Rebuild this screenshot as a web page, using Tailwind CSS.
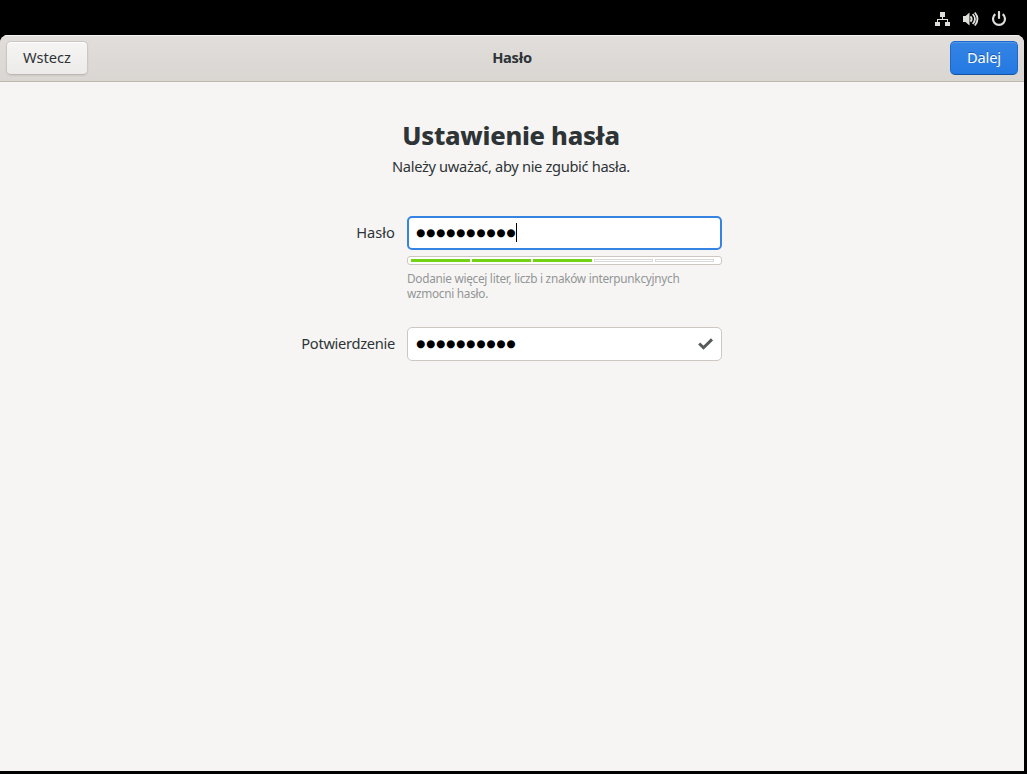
<!DOCTYPE html>
<html lang="pl">
<head>
<meta charset="utf-8">
<title>Hasło</title>
<script src="https://cdn.jsdelivr.net/npm/@tailwindcss/browser@4"></script>
</head>
<body class="w-[1027px] h-[774px] overflow-hidden bg-black flex flex-col font-['Noto_Sans',sans-serif] text-[14.67px] text-[#2e3436]">
  <div class="h-[35px] shrink-0 flex items-center justify-end gap-3 pr-5 pt-[3px] text-[#dededa]">
    <svg class="size-4" viewBox="0 0 16 16" fill="currentColor"><path d="M5 1h5v5H8v2h5v3h2v4h-5v-4h2V9H3v2h2v4H0v-4h2V8h5V6H5z"/></svg>
    <svg class="size-4" viewBox="0 0 16 16" fill="currentColor"><path d="M0 5h2.500L6.500 1.500v13L2.500 11H0z"/><g fill="none" stroke="currentColor" stroke-width="1.8"><path d="M7.500 5.300q2.400 2.700 0 5.400"/><path d="M9.700 3q4.600 5 0 10"/><path d="M11.800 1.500q5.400 6.500 0 13"/></g></svg>
    <svg class="size-4" viewBox="0 0 16 16" fill="none" stroke="currentColor" stroke-width="2.2"><path d="M4.300 3.100a6 6 0 1 0 7.400 0"/><path d="M8 1v6" stroke-linecap="round"/></svg>
  </div>
  <main class="w-[1024px] h-[736px] shrink-0 rounded-t-[8px] bg-[#f6f5f4] flex flex-col overflow-hidden">
    <header class="h-[47px] shrink-0 flex items-center justify-between px-[6px] border-b border-[#bfb8b1] bg-linear-to-b from-[#e1dedb] to-[#dad6d2] shadow-[inset_0_1px_#f5f4f2]">
      <button class="w-[82px] h-[34px] pb-[2px] rounded-[5px] border border-[#cdc7c2] border-b-[#bfb8b1] bg-linear-to-t from-[#edebe9] to-[#f6f5f4] shadow-[inset_0_1px_#fff,0_1px_2px_#00000012]">Wstecz</button>
      <h1 class="font-bold pb-[2px] mr-[14px] tracking-[-0.25px]">Hasło</h1>
      <button class="w-[68px] h-[34px] pb-[2px] rounded-[5px] border border-[#1b6acb] border-b-[#15539e] bg-linear-to-t from-[#2379e2] to-[#3584e4] text-white tracking-[-0.2px] shadow-[inset_0_1px_#5397e8] [text-shadow:0_-1px_#15539ecc]">Dalej</button>
    </header>
    <section class="flex flex-col items-center pt-[35px] pr-[2px]">
      <h2 class="h-[36px] leading-[36px] text-[25.5px] font-extrabold tracking-[-0.28px] whitespace-nowrap">Ustawienie hasła</h2>
      <p class="h-[24px] leading-[26px] tracking-[-0.34px] whitespace-nowrap">Należy uważać, aby nie zgubić hasła.</p>
    </section>
    <form class="mt-[39px] grid grid-cols-[395px_315px] gap-x-3">
      <label class="h-[34px] leading-[32px] text-right">Hasło</label>
      <div>
        <div class="h-[34px] rounded-[5px] border-2 border-[#3584e4] bg-white flex items-center pl-[7px]">
          <span class="w-[100px] text-black font-['DejaVu_Sans'] text-[10.5px] leading-[20px] pb-[3px] tracking-[0.86px] whitespace-nowrap">●●●●●●●●●●</span><span class="w-px h-[19px] mb-[2px] bg-black"></span>
        </div>
        <div class="mt-[6px] h-[9px] rounded-[3px] border border-[#cdc7c2] bg-white flex gap-[2px] items-center pl-[3px]">
          <span class="w-[59px] h-[3px] bg-[#73d216]"></span><span class="w-[59px] h-[3px] bg-[#73d216]"></span><span class="w-[59px] h-[3px] bg-[#73d216]"></span><span class="w-[59px] h-[3px] border border-[#d8d8d6]"></span><span class="w-[59px] h-[3px] border border-[#d8d8d6]"></span>
        </div>
        <p class="mt-[6px] text-[11.8px] leading-[15px] tracking-[-0.28px] text-[#929595] whitespace-nowrap">Dodanie więcej liter, liczb i znaków interpunkcyjnych<br>wzmocni hasło.</p>
      </div>
      <label class="mt-[26px] h-[34px] leading-[32px] text-right tracking-[-0.3px]">Potwierdzenie</label>
      <div class="mt-[26px] h-[34px] rounded-[5px] border border-[#cdc7c2] bg-white flex items-center justify-between pl-2 pr-[7px]">
        <span class="w-[100px] text-black font-['DejaVu_Sans'] text-[10.5px] leading-[20px] pb-[3px] tracking-[0.86px] whitespace-nowrap">●●●●●●●●●●</span>
        <svg class="size-4" viewBox="0 0 16 16" fill="none" stroke="#555b5b" stroke-width="3"><path d="M1.200 7.500 5.500 11.700 14 3.400"/></svg>
      </div>
    </form>
  </main>
</body>
</html>
